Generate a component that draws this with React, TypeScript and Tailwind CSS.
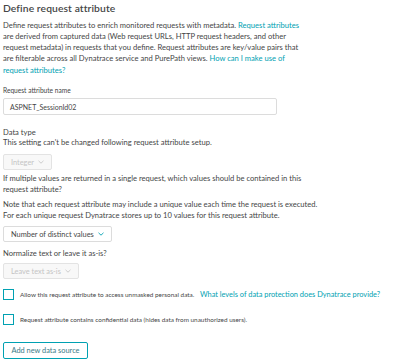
import type { ReactNode } from "react";

function Chevron({ muted }: { muted?: boolean }) {
  return (
    <svg
      width="6"
      height="4"
      viewBox="0 0 6 4"
      className={muted ? "text-[#c8c8c8]" : "text-[#00a1b2]"}
      aria-hidden="true"
    >
      <path d="M0.5 0.8 L3 3.2 L5.5 0.8" fill="none" stroke="currentColor" strokeWidth="0.9" />
    </svg>
  );
}

function Select({ label, disabled, width }: { label: string; disabled?: boolean; width: string }) {
  return (
    <div
      className={`flex h-[16px] items-center justify-between rounded-[2px] border px-[7px] text-[7.4px] ${width} ${
        disabled ? "border-[#e3e3e3] bg-[#f8f8f8] text-[#c4c4c4]" : "border-[#dcdcdc] bg-white text-[#454646]"
      }`}
    >
      <span>{label}</span>
      <Chevron muted={disabled} />
    </div>
  );
}

function Checkbox({ children }: { children: ReactNode }) {
  return (
    <div className="flex items-center gap-[6px]">
      <span className="h-[11px] w-[11px] shrink-0 border border-[#00a1b2] bg-white" />
      <span className="whitespace-nowrap text-[6.4px] text-[#454646]">{children}</span>
    </div>
  );
}

const link = "text-[#00a1b2]";

export default function App() {
  return (
    <div className="h-[359px] w-[400px] overflow-hidden bg-white px-[3px] pt-[1px] font-['Lato','Open_Sans',sans-serif] text-[#454646]">
      <h1 className="whitespace-nowrap text-[10.3px] leading-[14px] font-semibold tracking-[0.1px]">Define request attribute</h1>

      <p className="mt-[4.5px] whitespace-nowrap text-[7.6px] leading-[11.25px]">
        Define request attributes to enrich monitored requests with metadata.{" "}
        <span className={link}>Request attributes</span>
        <br />
        are derived from captured data (Web request URLs, HTTP request headers, and other
        <br />
        request metadata) in requests that you define. Request attributes are key/value pairs that
        <br />
        are filterable across all Dynatrace service and PurePath views.{" "}
        <span className={link}>How can I make use of</span>
        <br />
        <span className={link}>request attributes?</span>
      </p>

      <label className="mt-[9.5px] block text-[6.6px] leading-[10px]">Request attribute name</label>
      <div className="mt-[3px] flex h-[17px] w-[274px] items-center rounded-[2px] border border-[#dcdcdc] px-[6px] text-[7px]">
        ASPNET_SessionId02
      </div>

      <div className="mt-[13px] text-[7.6px] leading-[9.5px]">Data type</div>
      <div className="whitespace-nowrap text-[7.6px] leading-[9.5px]">
        This setting can't be changed following request attribute setup.
      </div>
      <div className="mt-[7px]">
        <Select label="Integer" disabled width="w-[49px]" />
      </div>

      <p className="mt-[3px] whitespace-nowrap text-[7.6px] leading-[11px]">
        If multiple values are returned in a single request, which values should be contained in this
        <br />
        request attribute?
      </p>
      <p className="mt-[4px] whitespace-nowrap text-[7.6px] leading-[11px]">
        Note that each request attribute may include a unique value each time the request is executed.
        <br />
        For each unique request Dynatrace stores up to 10 values for this request attribute.
      </p>
      <div className="mt-[5px]">
        <Select label="Number of distinct values" width="w-[109px]" />
      </div>

      <div className="mt-[6px] text-[7.6px] leading-[11px]">Normalize text or leave it as-is?</div>
      <div className="mt-[4px]">
        <Select label="Leave text as-is" disabled width="w-[76px]" />
      </div>

      <div className="mt-[10px] flex flex-col gap-[14px]">
        <Checkbox>
          Allow this request attribute to access unmasked personal data.{" "}
          <span className={`${link} ml-[4px] text-[7.4px]`}>What levels of data protection does Dynatrace provide?</span>
        </Checkbox>
        <Checkbox>Request attribute contains confidential data (hides data from unauthorized users).</Checkbox>
      </div>

      <button className="mt-[17px] flex h-[17px] w-[85px] items-center justify-center rounded-[2px] border border-[#00a1b2] text-[7.4px] text-[#3b7a86]">
        Add new data source
      </button>
    </div>
  );
}
